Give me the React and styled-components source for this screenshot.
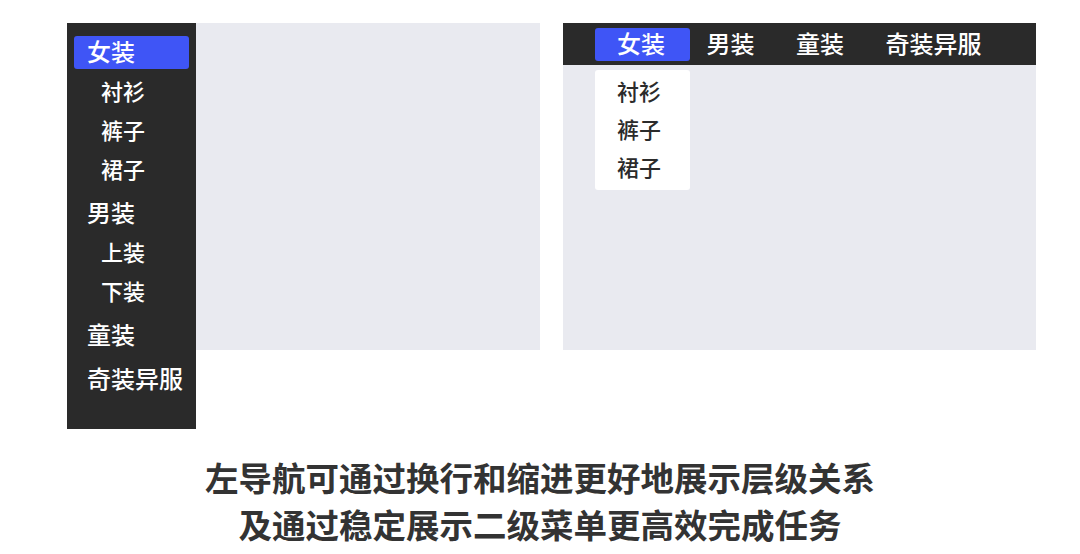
import React from "react";
import styled, { createGlobalStyle } from "styled-components";

const GlobalStyle = createGlobalStyle`
  body {
    margin: 0;
    background: #ffffff;
    font-family: "Noto Sans CJK SC", "Noto Sans", sans-serif;
  }
`;

const Page = styled.div`
  width: 1080px;
  height: 554px;
  padding: 23px 0 0 67px;
  box-sizing: border-box;
  overflow: hidden;
`;

const Demos = styled.div`
  display: flex;
  align-items: flex-start;
  gap: 23px;
`;

/* ---- left: side navigation ---- */

const SideLayout = styled.div`
  display: flex;
  align-items: flex-start;
  width: 473px;
`;

const Sidebar = styled.nav`
  width: 129px;
  height: 406px;
  padding-top: 7px;
  box-sizing: border-box;
  background: #2a2a2a;
  display: flex;
  flex-direction: column;
`;

const SideItem = styled.div`
  height: 44px;
  padding: 0 7px;
  display: flex;
  align-items: center;
`;

const SideLabel = styled.span`
  flex: 1;
  height: 33px;
  padding: 0 0 3px 13px;
  box-sizing: border-box;
  display: flex;
  align-items: center;
  border-radius: 3px;
  font-size: 24px;
  font-weight: 500;
  color: #ffffff;
  background: ${(p) => (p.$active ? "#3f55f6" : "transparent")};
`;

const SideSubItem = styled.div`
  height: 39px;
  padding: 0 0 8px 34px;
  box-sizing: border-box;
  display: flex;
  align-items: center;
  font-size: 22px;
  font-weight: 500;
  color: #ffffff;
`;

const Canvas = styled.div`
  flex: 1;
  height: ${(p) => p.$height}px;
  background: #e9eaf0;
`;

/* ---- right: top navigation ---- */

const TopLayout = styled.div`
  width: 473px;
  height: 327px;
  background: #e9eaf0;
  display: flex;
  flex-direction: column;
`;

const TopBar = styled.nav`
  height: 42px;
  padding-left: 32px;
  background: #2a2a2a;
  display: flex;
  align-items: center;
`;

const Tab = styled.div`
  position: relative;
  height: 33px;
  padding: 0 ${(p) => (p.$active ? "25px" : "19.5px")} 3px 22px;
  margin-right: ${(p) => (p.$active ? "-5.5px" : "0")};
  box-sizing: border-box;
  display: flex;
  align-items: center;
  border-radius: 3px;
  font-size: 24px;
  font-weight: 500;
  color: #ffffff;
  background: ${(p) => (p.$active ? "#3f55f6" : "transparent")};
`;

const Dropdown = styled.div`
  position: absolute;
  top: 42px;
  left: 0;
  right: 0;
  padding: 3px 0;
  background: #ffffff;
  border-radius: 3px;
`;

const DropItem = styled.div`
  height: 38px;
  padding: 0 0 4px 22px;
  box-sizing: border-box;
  display: flex;
  align-items: center;
  font-size: 22px;
  font-weight: 500;
  color: #2b2b2b;
`;

const Caption = styled.p`
  margin: 24px 0 0 -67px;
  text-align: center;
  font-size: 33.5px;
  line-height: 47px;
  font-weight: 700;
  color: #333333;
`;

const menu = [
  { name: "女装", children: ["衬衫", "裤子", "裙子"] },
  { name: "男装", children: ["上装", "下装"] },
  { name: "童装", children: [] },
  { name: "奇装异服", children: [] },
];

export default function App() {
  return (
    <>
      <GlobalStyle />
      <Page>
        <Demos>
          <SideLayout>
            <Sidebar>
              {menu.map((group, i) => (
                <React.Fragment key={group.name}>
                  <SideItem>
                    <SideLabel $active={i === 0}>{group.name}</SideLabel>
                  </SideItem>
                  {group.children.map((c) => (
                    <SideSubItem key={c}>{c}</SideSubItem>
                  ))}
                </React.Fragment>
              ))}
            </Sidebar>
            <Canvas $height={327} />
          </SideLayout>

          <TopLayout>
            <TopBar>
              {menu.map((group, i) => (
                <Tab key={group.name} $active={i === 0}>
                  {group.name}
                  {i === 0 && (
                    <Dropdown>
                      {group.children.map((c) => (
                        <DropItem key={c}>{c}</DropItem>
                      ))}
                    </Dropdown>
                  )}
                </Tab>
              ))}
            </TopBar>
          </TopLayout>
        </Demos>

        <Caption>
          左导航可通过换行和缩进更好地展示层级关系
          <br />
          及通过稳定展示二级菜单更高效完成任务
        </Caption>
      </Page>
    </>
  );
}
